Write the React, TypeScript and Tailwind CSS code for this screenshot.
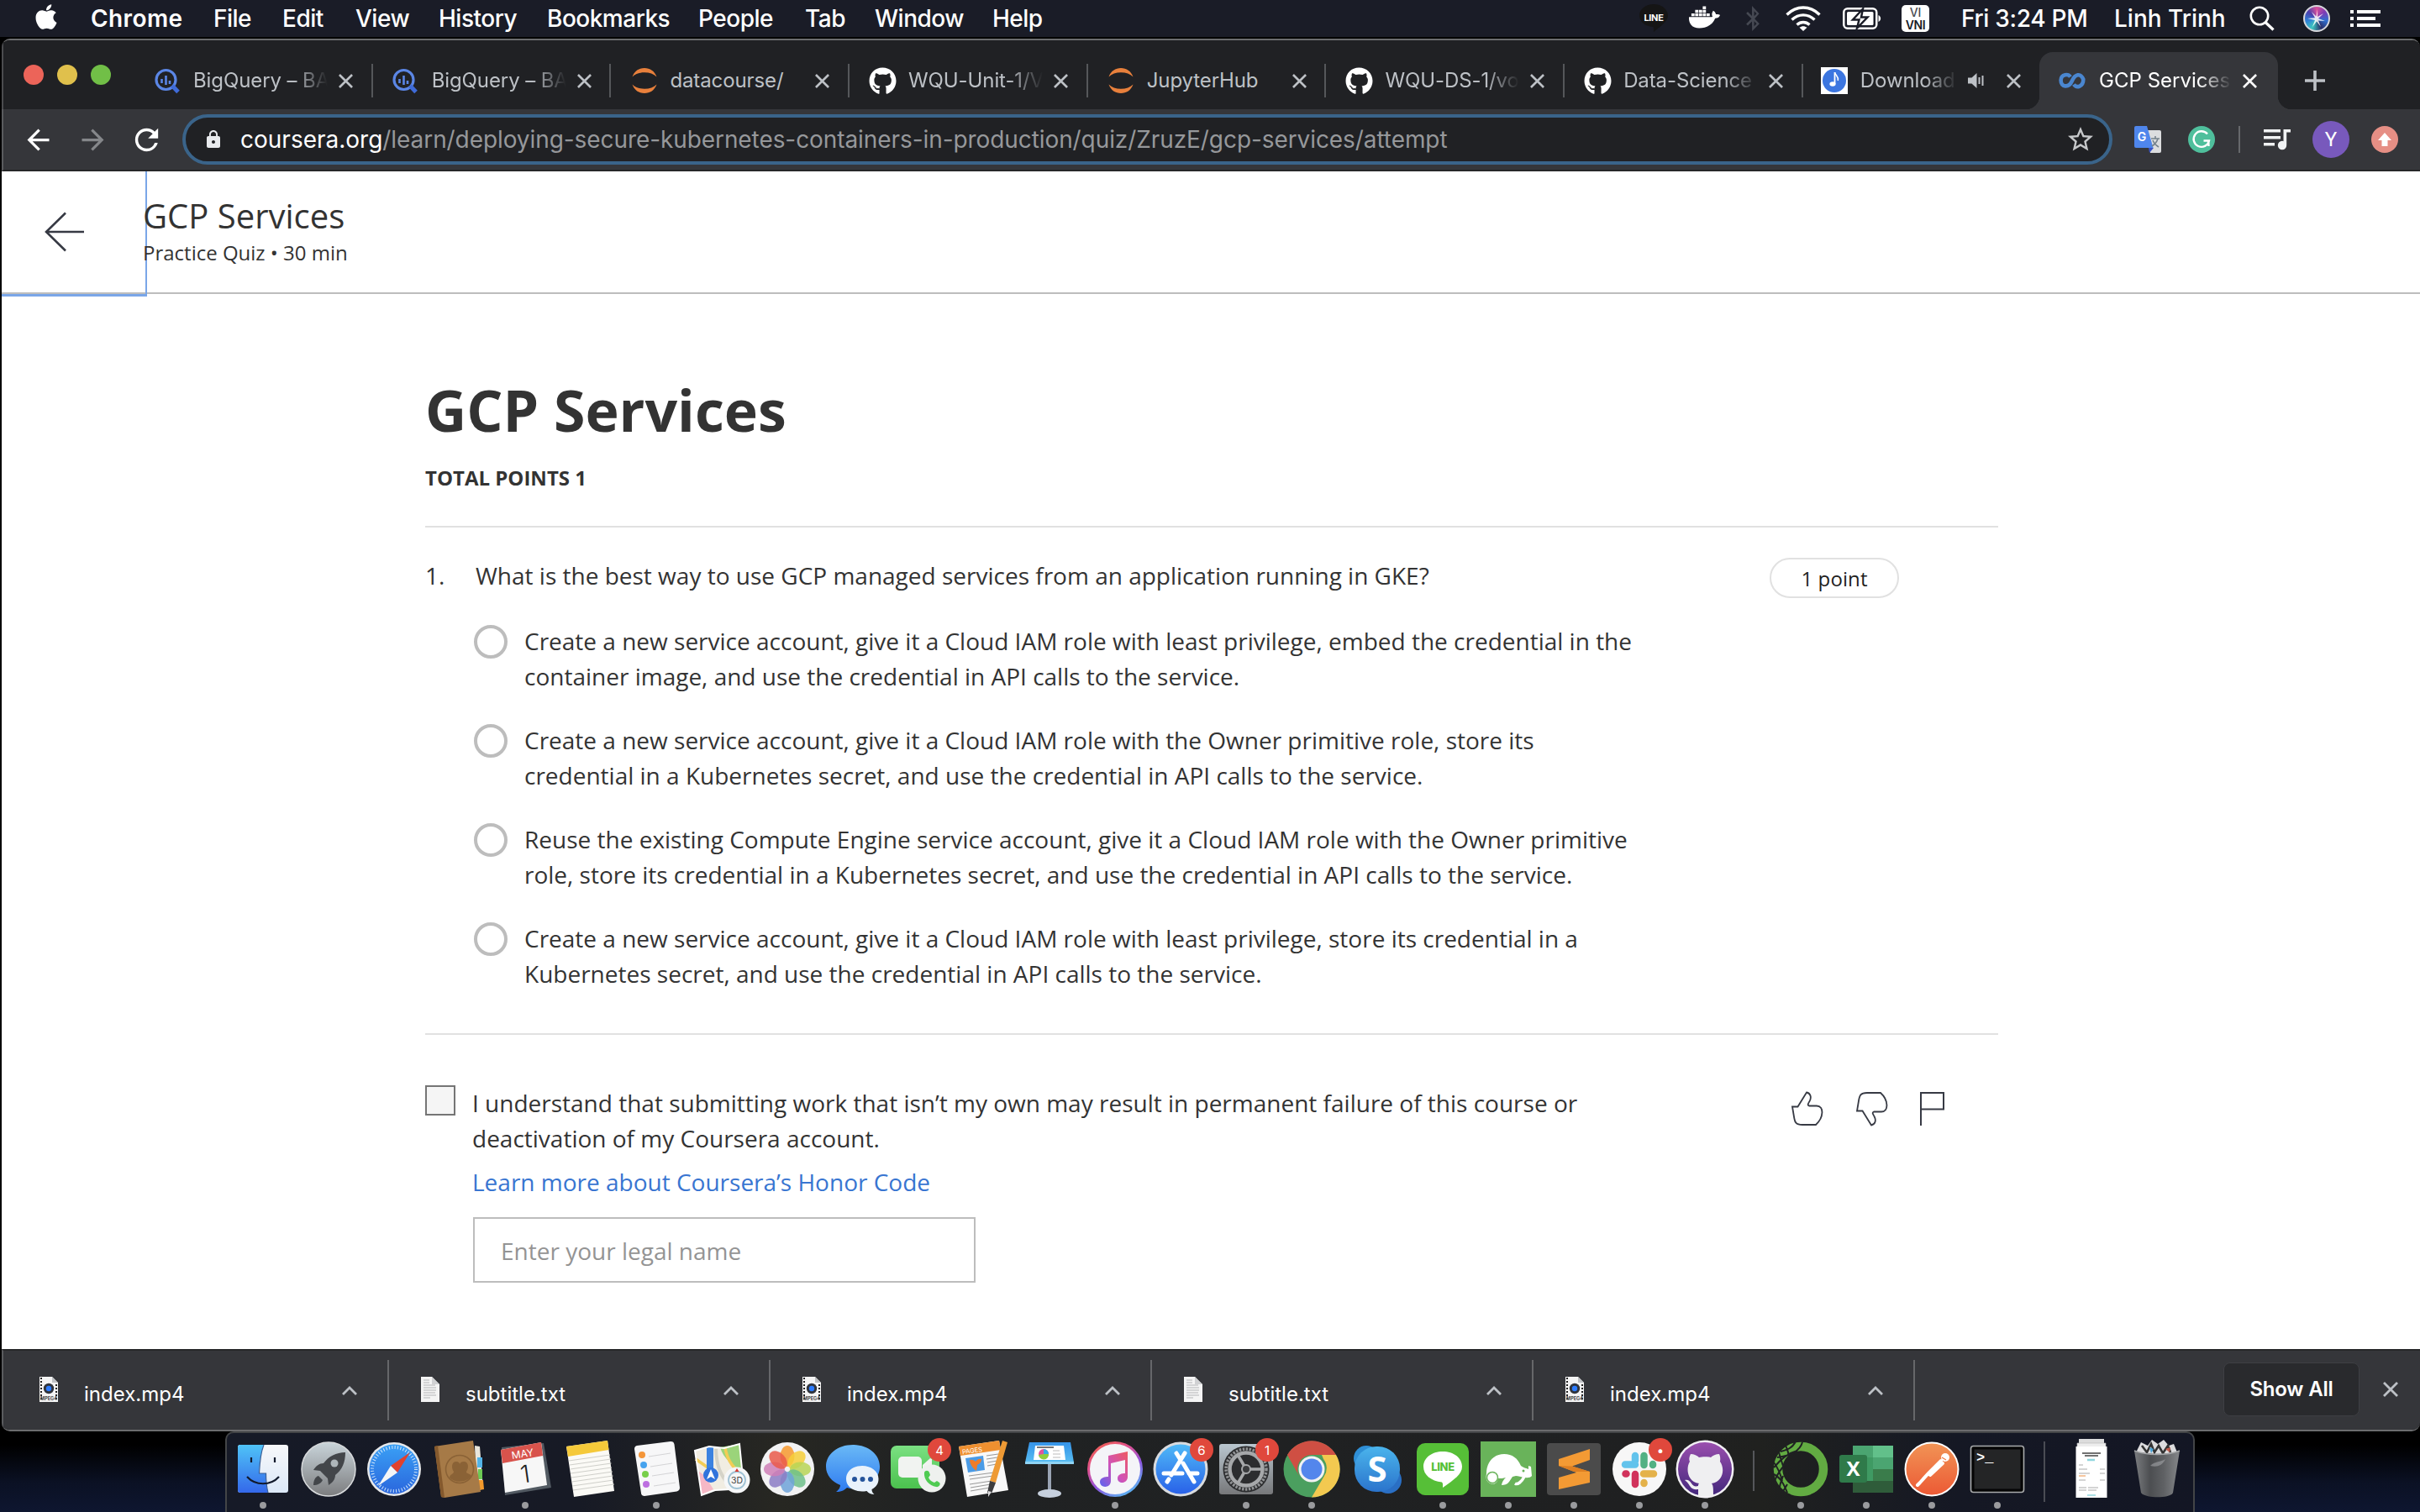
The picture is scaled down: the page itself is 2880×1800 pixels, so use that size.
import React from 'react';
import { FaApple, FaBluetoothB, FaDocker, FaGithub } from 'react-icons/fa';
import { MdArrowBack, MdArrowForward, MdLock, MdRefresh, MdStarBorder } from 'react-icons/md';

type Kids = { children?: React.ReactNode };

/* ---------- menu bar ---------- */

const menus: [string, string][] = [
  ['File', 'w-[82px]'],
  ['Edit', 'w-[87px]'],
  ['View', 'w-[99px]'],
  ['History', 'w-[129px]'],
  ['Bookmarks', 'w-[180px]'],
  ['People', 'w-[127px]'],
  ['Tab', 'w-[83px]'],
  ['Window', 'w-[140px]'],
  ['Help', 'w-[80px]'],
];

function MenuBar() {
  return (
    <div className="flex h-[46px] shrink-0 items-center border-b-2 border-black bg-[#1a1c27] text-[28px] font-medium tracking-[-0.5px] text-white">
      <FaApple className="ml-[38px] -mt-1 size-[34px] shrink-0" />
      <span className="ml-[36px] w-[146px] shrink-0 font-semibold tracking-[0.4px]">Chrome</span>
      {menus.map(([m, w]) => (
        <span key={m} className={'shrink-0 ' + w}>{m}</span>
      ))}
      <svg className="ml-[689px] h-[36px] w-[36px] shrink-0" viewBox="0 0 36 36">
        <path d="M18 1c9.500 0 17 6 17 13.500C35 22 25 28 18 34 18 30 18 28 17 28 7.500 27 1 21.500 1 14.500 1 7 8.500 1 18 1z" fill="#151515" />
        <text x="18" y="20.500" textAnchor="middle" fontSize="11" fontWeight="700" letterSpacing="-0.3" fill="#fff" fontFamily="Inter">LINE</text>
      </svg>
      <FaDocker className="ml-[24px] -mt-1 size-[37px] shrink-0" />
      <FaBluetoothB className="ml-[24px] size-[30px] shrink-0 text-[#454852]" />
      <svg className="ml-[24px] h-[32px] w-[42px] shrink-0" viewBox="0 0 42 32" fill="none" stroke="#fff" strokeWidth="3.400">
        <path d="M1.500 11.500C13 .2 29 .2 40.500 11.500" />
        <path d="M7.500 17.500c8-7.500 19-7.500 27 0" />
        <path d="M13.500 23.500c4.500-4 10.500-4 15 0" />
        <path d="M21 31l-4.500-4.200c2.800-2.200 6.200-2.200 9 0z" fill="#fff" stroke="none" />
      </svg>
      <svg className="ml-[26px] h-[26px] w-[46px] shrink-0" viewBox="0 0 46 26">
        <rect x="1.250" y="1.250" width="39" height="23.500" rx="4.500" fill="none" stroke="#fff" strokeWidth="2.500" />
        <rect x="5" y="5" width="31.500" height="16" rx="1.500" fill="#fff" />
        <path d="M42.500 9c3.500 1.500 3.500 6.500 0 8z" fill="#fff" />
        <path d="M24 1.500L12 14.500h7.500L17 24.500 29.500 11.500H22z" fill="#fff" stroke="#1a1c27" strokeWidth="2.500" />
      </svg>
      <svg className="ml-[24px] h-[32px] w-[33px] shrink-0" viewBox="0 0 33 32">
        <rect width="33" height="32" rx="5" fill="#fff" />
        <text x="16.500" y="13.500" textAnchor="middle" fontSize="14" fontWeight="500" letterSpacing="0" fill="#4a4b52" fontFamily="Inter">VI</text>
        <text x="16.500" y="28.500" textAnchor="middle" fontSize="14" fontWeight="600" letterSpacing="-0.4" fill="#1a1c27" fontFamily="Inter">VNI</text>
      </svg>
      <span className="ml-[38px] w-[182px] shrink-0 whitespace-nowrap tracking-[-0.3px]">Fri 3:24 PM</span>
      <span className="w-[161px] shrink-0 whitespace-nowrap tracking-[0px]">Linh Trinh</span>
      <svg className="h-[30px] w-[30px] shrink-0" viewBox="0 0 30 30" fill="none" stroke="#fff">
        <circle cx="12" cy="12" r="10.200" strokeWidth="2.600" />
        <path d="M19 19.500l9.500 9" strokeWidth="3.200" />
      </svg>
      <div className="ml-[34px] flex size-[32px] shrink-0 items-center justify-center rounded-full border-2 border-[#d6d7dc] bg-[conic-gradient(#d9509a,#7d3bb5,#2f6fd0,#2a2f6a,#3fc7c0,#2f7fd6,#4a3fae,#d9509a)]">
        <svg viewBox="0 0 24 24" className="size-[24px]" fill="#fff">
          <path d="M13 1l0 9 7-4-6 6 8 3-8-.5L17 22l-5-6.500L7 22l3-8-9-2 9-.8L6 4l5.500 5.500z" opacity=".85" />
        </svg>
      </div>
      <svg className="ml-[24px] h-[20px] w-[36px] shrink-0" viewBox="0 0 36 20" fill="#fff">
        <path d="M0 0h4v4H0zM8 0h28v4H8zM0 8h4v4H0zM8 8h22v4H8zM0 16h4v4H0zM8 16h28v4H8z" />
      </svg>
    </div>
  );
}

/* ---------- tab strip ---------- */

const BigQueryIcon = () => (
  <svg viewBox="0 0 32 32" className="size-8" fill="none" stroke="#5b86e5">
    <circle cx="13.500" cy="15" r="11.500" strokeWidth="3.200" />
    <path d="M8.500 14v5M13.500 10v11M18 16v4" strokeWidth="2.600" />
    <path d="M21 22l7 7.500" strokeWidth="5" stroke="#3f6bd8" />
  </svg>
);
const JupyterIcon = () => (
  <svg viewBox="0 0 32 32" className="size-8" fill="#e8803c">
    <path d="M1.500 11.500C4 4.500 9.500 1 16 1s12 3.500 14.500 10.500C27 8 22 6.300 16 6.300S5 8 1.500 11.500z" />
    <path d="M1.500 20.500C4 27.500 9.500 31 16 31s12-3.500 14.500-10.500C27 24 22 25.700 16 25.700S5 24 1.500 20.500z" />
  </svg>
);
const GithubTabIcon = () => <FaGithub className="size-[33px] text-white" />;
const MusicIcon = () => (
  <svg viewBox="0 0 32 32" className="size-8">
    <path d="M0 0h32v32H0z" fill="#fff" />
    <circle cx="16" cy="16" r="14" fill="#3c76e0" />
    <ellipse cx="14" cy="20" rx="3.600" ry="2.800" fill="#fff" />
    <path d="M16.500 6v14" stroke="#fff" strokeWidth="1.800" />
    <path d="M16.500 6c.5 4 5 4.500 3.800 10" stroke="#fff" strokeWidth="1.600" fill="none" />
  </svg>
);
const CourseraIcon = () => (
  <svg viewBox="0 0 32 20" className="h-5 w-8" fill="none" stroke="#4a86cf" strokeWidth="4.600">
    <path d="M14 5.500C11.500 2 3 1.500 2.600 9.500c0 8.500 9.400 9.500 13.200 1S26 .5 29.300 8.500c0 8.500-7.800 11-11.300 6" />
  </svg>
);

const CloseX = ({ className = 'size-[17px]' }: { className?: string }) => (
  <svg viewBox="0 0 18 18" className={'shrink-0 ' + className} stroke="currentColor" strokeWidth="2.800">
    <path d="M1 1l16 16M17 1L1 17" />
  </svg>
);

const fade = 'overflow-hidden whitespace-nowrap [mask-image:linear-gradient(to_right,#000_calc(100%-40px),transparent)]';

const tabs: { title: string; icon: React.ReactNode; sound?: boolean; long?: boolean }[] = [
  { title: 'BigQuery – BA', icon: <BigQueryIcon />, long: true },
  { title: 'BigQuery – BA', icon: <BigQueryIcon />, long: true },
  { title: 'datacourse/', icon: <JupyterIcon /> },
  { title: 'WQU-Unit-1/V', icon: <GithubTabIcon />, long: true },
  { title: 'JupyterHub', icon: <JupyterIcon /> },
  { title: 'WQU-DS-1/vo', icon: <GithubTabIcon />, long: true },
  { title: 'Data-Science', icon: <GithubTabIcon />, long: true },
  { title: 'Download', icon: <MusicIcon />, sound: true, long: true },
];

function TabStrip() {
  return (
    <div className="flex h-[82px] shrink-0 border-l-2 border-[#4b4c4f] bg-[#202124] text-[24px] text-[#bdc1c6]">
      <div className="flex w-[156px] shrink-0 items-center gap-4 pl-6">
        <div className="size-6 rounded-full bg-[#ec6459]" />
        <div className="size-6 rounded-full bg-[#e0c04c]" />
        <div className="size-6 rounded-full bg-[#71bf47]" />
      </div>
      {tabs.map((t, i) => (
        <div key={i} className="flex w-[283.7px] shrink-0 items-center pt-[14px] pl-[23px]">
          <div className={'flex w-[33px] shrink-0 justify-center ' + (t.sound ? '-ml-[2px] mr-[2px]' : '')}>{t.icon}</div>
          <div className={'shrink-0 tracking-[-0.1px] ' + (t.sound ? 'ml-[12px] w-[116px] ' : 'ml-[14px] w-[160px] ') + (t.long ? fade : 'whitespace-nowrap')}>{t.title}</div>
          {t.sound && (
            <svg viewBox="0 0 20 18" className="ml-[12px] h-[18px] w-5 shrink-0" fill="currentColor">
              <path d="M0 5.500h4.500L10.500 0v18l-6-5.500H0zM12.500 5h2v8h-2zM16.500 3h2v12h-2z" />
            </svg>
          )}
          <CloseX className={'size-[17px] ' + (t.sound ? 'ml-[26px]' : 'ml-[13px]')} />
          {i < 7 && <div className="ml-auto h-10 w-[2px] bg-[#55575a]" />}
        </div>
      ))}
      <div className="relative -ml-[2.400px] flex h-[68px] w-[284px] shrink-0 items-center self-end rounded-t-[16px] bg-[#35363a] pl-[23px] text-white">
        <div className="absolute bottom-0 -left-4 size-4 bg-[radial-gradient(circle_at_0_0,transparent_16px,#35363a_16.5px)]" />
        <div className="absolute -right-4 bottom-0 size-4 bg-[radial-gradient(circle_at_100%_0,transparent_16px,#35363a_16.5px)]" />
        <CourseraIcon />
        <div className={'ml-[16px] w-[158px] shrink-0 ' + fade}>GCP Services</div>
        <CloseX className="ml-[13px] size-[17px]" />
      </div>
      <svg viewBox="0 0 24 24" className="mt-9 ml-[32px] size-6 shrink-0" stroke="#bdc1c6" strokeWidth="3.600">
        <path d="M0 12h24M12 0v24" />
      </svg>
    </div>
  );
}

/* ---------- toolbar ---------- */

function Toolbar() {
  return (
    <div className="flex h-[74px] shrink-0 items-center border-b-2 border-l-2 border-b-[#262729] border-l-[#5a5b5e] bg-[#35363a]">
      <MdArrowBack className="ml-[22px] size-[39px] shrink-0 text-white" />
      <MdArrowForward className="ml-[26px] size-[39px] shrink-0 text-[#85878a]" />
      <MdRefresh className="ml-[24px] size-[41px] shrink-0 text-white" />
      <div className="ml-[22px] flex h-[60px] w-[2297px] shrink-0 items-center rounded-full border-4 border-[#3a648a] bg-[#202124] text-[28px]">
        <MdLock className="ml-[21px] size-[24px] shrink-0 text-[#e8eaed]" />
        <span className="ml-[20px] whitespace-nowrap text-white">coursera.org</span>
        <span className="tracking-[-0.08px] whitespace-nowrap text-[#96989b]">/learn/deploying-secure-kubernetes-containers-in-production/quiz/ZruzE/gcp-services/attempt</span>
        <MdStarBorder className="mr-[16px] ml-auto size-[36px] shrink-0 text-[#c6c8ca]" />
      </div>
      <svg viewBox="0 0 32 32" className="ml-[26px] size-8 shrink-0">
        <path d="M14 5h16a2 2 0 0 1 2 2v23a2 2 0 0 1-2 2H19z" fill="#dcdddf" />
        <path d="M17 26h6l-5 6z" fill="#3a53c4" />
        <path d="M2 0h13l7.500 26H2a2 2 0 0 1-2-2V2a2 2 0 0 1 2-2z" fill="#4f86ec" />
        <text x="9" y="18" textAnchor="middle" fontSize="14" fontWeight="600" fill="#fff" fontFamily="Inter">G</text>
        <path d="M20 15h10M25 12v3M28 15c-1 4-4 7-7 9M22 17c1 3 4 6 7 8" stroke="#75828c" strokeWidth="1.600" fill="none" />
      </svg>
      <svg viewBox="0 0 32 32" className="ml-[32px] size-8 shrink-0" fill="none">
        <circle cx="16" cy="16" r="16" fill="#4fbf9c" />
        <path d="M23 9.500A9.300 9.300 0 1 0 25 17.500h-6.500M24.300 18.500l.2 5.500" stroke="#fff" strokeWidth="2.400" />
      </svg>
      <div className="ml-[28px] h-8 w-[2px] shrink-0 bg-[#66686b]" />
      <svg viewBox="0 0 32 26" className="ml-[28px] h-[26px] w-8 shrink-0" fill="#f1f3f4">
        <path d="M0 1h20v3.600H0zM0 9h20v3.600H0zM0 17h13v3.600H0z" />
        <path d="M23.500 1H32v3.600h-4.800V19.500h-3.700z" />
        <circle cx="22" cy="20" r="5.200" />
      </svg>
      <div className="ml-[26px] flex size-[44px] shrink-0 items-center justify-center rounded-full bg-[#7859bc] font-['Roboto'] text-[24px] text-white">Y</div>
      <svg viewBox="0 0 32 32" className="ml-[26px] size-8 shrink-0">
        <circle cx="16" cy="16" r="16" fill="#e68f85" />
        <path d="M16 8l8 9h-4.500v7h-7v-7H8z" fill="#fff" />
      </svg>
    </div>
  );
}

/* ---------- quiz page ---------- */

const answers: [string, string][] = [
  ['Create a new service account, give it a Cloud IAM role with least privilege, embed the credential in the', 'container image, and use the credential in API calls to the service.'],
  ['Create a new service account, give it a Cloud IAM role with the Owner primitive role, store its', 'credential in a Kubernetes secret, and use the credential in API calls to the service.'],
  ['Reuse the existing Compute Engine service account, give it a Cloud IAM role with the Owner primitive', 'role, store its credential in a Kubernetes secret, and use the credential in API calls to the service.'],
  ['Create a new service account, give it a Cloud IAM role with least privilege, store its credential in a', 'Kubernetes secret, and use the credential in API calls to the service.'],
];

function Page() {
  return (
    <div className="flex h-[1402px] shrink-0 flex-col bg-white font-['Open_Sans',sans-serif] text-[28px] leading-[42px] text-[#333]">
      <header className="relative flex h-[146px] shrink-0 border-b-2 border-[#bdbdbd]">
        <div className="absolute top-0 left-0 h-[149px] w-[173px] border-r-2 border-b-[3px] border-[#7aa6e8]" />
        <div className="flex w-[168px] shrink-0 items-center pl-[51px]">
          <svg viewBox="0 0 48 48" className="size-[48px]" fill="none" stroke="#373a44" strokeWidth="2.600">
            <path d="M47 24H2M25 1.500L2 24l23 22.500" />
          </svg>
        </div>
        <div className="relative pt-[25px]">
          <div className="text-[40px] leading-[56px]">GCP Services</div>
          <div className="text-[24px] leading-[32px]">Practice Quiz • 30 min</div>
        </div>
      </header>
      <main className="ml-[504px] flex w-[1872px] flex-col pt-[98px]">
        <h1 className="text-[68px] leading-[80px] font-bold">GCP Services</h1>
        <div className="mt-[25px] text-[24px] leading-[32px] font-bold">TOTAL POINTS 1</div>
        <div className="mt-[41px] h-[2px] bg-[#e1e1e1]" />
        <div className="mt-[36px] flex">
          <span className="w-[60px]">1.</span>
          <span className="w-[1540px]">What is the best way to use GCP managed services from an application running in GKE?</span>
          <span className="-mb-[6px] flex h-12 w-[154px] items-center justify-center rounded-full border-2 border-[#e1e1e1] pt-[2px] text-[24px] leading-[32px] tracking-[0.1px] text-[#1f1f1f]">1 point</span>
        </div>
        <div className="mt-[36px] flex flex-col gap-[34px] pl-[58px]">
          {answers.map(([a, b]) => (
            <div key={a + b} className="flex gap-[20px]">
              <div className="mt-[2px] size-10 shrink-0 rounded-full border-4 border-[#bdbdbd]" />
              <div className="whitespace-nowrap">
                <div>{a}</div>
                <div>{b}</div>
              </div>
            </div>
          ))}
        </div>
        <div className="mt-[50px] h-[2px] bg-[#e1e1e1]" />
        <div className="mt-[60px] flex">
          <div className="size-9 shrink-0 border-2 border-[#757575] bg-[#f5f5f5]" />
          <div className="ml-[20px] w-[1570px]">
            <div>I understand that submitting work that isn’t my own may result in permanent failure of this course or</div>
            <div>deactivation of my Coursera account.</div>
            <div className="mt-[10px] text-[#3875d1]">Learn more about Coursera’s Honor Code</div>
            <div className="mt-[21px] ml-[1px] flex h-[78px] w-[598px] items-center border-2 border-[#bdbdbd] pt-[2px] pl-[31px] text-[#949494]">Enter your legal name</div>
          </div>
          <div className="mt-[7px] flex h-[42px]">
            <svg viewBox="0 0 38 42" className="h-[42px] w-[38px]" fill="none" stroke="#373a44" strokeWidth="1.800">
              <path d="M1 18.500h6.500L18 1.500c5 1 6 6 3.500 10.500-1.500 2.500-3 4.500-.5 5.500h9c9 0 8.500 14-1 22.500H13c-8 0-9-3-10-9.500z" />
            </svg>
            <svg viewBox="0 0 38 42" className="ml-[39px] h-[42px] w-[38px]" fill="none" stroke="#373a44" strokeWidth="1.800">
              <path d="M1 23.500h6.500L18 40.500c5-1 6-6 3.500-10.500-1.500-2.500-3-4.500-.5-5.500h9c9 0 8.500-14-1-22.500H13c-8 0-9 3-10 9.500z" />
            </svg>
            <svg viewBox="0 0 30 42" className="ml-[37px] h-[42px] w-[30px]" fill="none" stroke="#373a44" strokeWidth="2">
              <path d="M2 41V2h27v19.500H2" />
            </svg>
          </div>
        </div>
      </main>
    </div>
  );
}

/* ---------- downloads ---------- */

const FilmFile = () => (
  <svg viewBox="0 0 22 30" className="h-[30px] w-[22px] shrink-0">
    <path d="M0 0h15l7 7v23H0z" fill="#f4f4f4" />
    <path d="M2 1v28M20 9v20" stroke="#222" strokeWidth="2" strokeDasharray="2 2" />
    <path d="M15 0v7h7z" fill="#bfc1c4" />
    <circle cx="11" cy="14" r="6.200" fill="#30343c" />
    <circle cx="11" cy="14" r="3.200" fill="#2b7bff" />
    <text x="11" y="28" textAnchor="middle" fontSize="5.500" fontWeight="700" fill="#444" fontFamily="Inter">MPEG4</text>
  </svg>
);
const TextFile = () => (
  <svg viewBox="0 0 22 30" className="h-[30px] w-[22px] shrink-0">
    <path d="M0 0h13l9 9v21H0z" fill="#f4f4f4" />
    <path d="M13 0v9h9z" fill="#d0d1d3" />
    <path d="M3 4h7M3 7h7M3 10h14M3 13h15M3 16h15M3 19h14M3 22h15M3 25h8" stroke="#b4b5b7" strokeWidth="1" />
  </svg>
);

function Shelf() {
  return (
    <div className="flex h-[96px] shrink-0 border-t-2 border-l-2 border-t-[#262729] border-l-[#5a5b5e] bg-[#35363a] pl-[5px] text-[24px] text-white">
      {['index.mp4', 'subtitle.txt', 'index.mp4', 'subtitle.txt', 'index.mp4'].map((f, i) => (
        <div key={i} className="flex w-[454px] shrink-0 items-center pl-[38px]">
          <div className="-mt-[3px]">{f === 'index.mp4' ? <FilmFile /> : <TextFile />}</div>
          <span className="ml-[31px] w-[307px] pt-[9px]">{f}</span>
          <svg viewBox="0 0 18 11" className="h-[11px] w-[18px] shrink-0" fill="none" stroke="#bdc1c6" strokeWidth="2.800">
            <path d="M1 10l8-8 8 8" />
          </svg>
          <div className="ml-auto h-[72px] w-[2px] bg-[#66676a]" />
        </div>
      ))}
      <div className="mt-[14px] ml-[367px] flex h-16 w-[162px] shrink-0 items-center justify-center rounded-[8px] border border-[#3e3f43] bg-[#292a2d] font-semibold tracking-[-0.2px]">Show All</div>
      <CloseX className="mt-[37px] ml-[28px] size-[18px] text-[#bdc1c6]" />
    </div>
  );
}

/* ---------- dock ---------- */

const S = ({ children }: Kids) => (
  <svg viewBox="0 0 72 72" className="size-[72px] overflow-visible">
    {children}
  </svg>
);

const Grad = ({ id, a, b }: { id: string; a: string; b: string }) => (
  <linearGradient id={id} x1="0" y1="0" x2="0" y2="1">
    <stop offset="0" stopColor={a} />
    <stop offset="1" stopColor={b} />
  </linearGradient>
);

const petals = ['#f79a2e', '#f6cf3a', '#b9d556', '#6fc08a', '#6fa3d8', '#8c7cc4', '#cf7fb6', '#ea5a4a'];

const Finder = () => (
  <S>
    <Grad id="fa" a="#4fc3f7" b="#3468ea" />
    <Grad id="fb" a="#f7f8fa" b="#dbe8f8" />
    <rect x="6" y="7" width="60" height="57" rx="3" fill="url(#fb)" />
    <path d="M9 7h28c-4 10-5 22-5.500 34h8c0 8 .5 15 2.500 23H9a3 3 0 0 1-3-3V10a3 3 0 0 1 3-3z" fill="url(#fa)" />
    <path d="M37 7c-4 10-5 22-5.500 34h8c0 8 .5 15 2.500 23" stroke="#3a5f96" strokeWidth="1.200" fill="none" />
    <path d="M22 22v6M50 22v6M17 45c10 11 28 11 38 0" stroke="#111a2c" strokeWidth="2.200" fill="none" />
  </S>
);
const Launchpad = () => (
  <S>
    <Grad id="lp" a="#c9d4da" b="#7c7d7f" />
    <circle cx="36" cy="36" r="32" fill="url(#lp)" stroke="#d8dadc" strokeWidth="1.500" />
    <path d="M56 16c-11 0-20 5-26 13-5 0-9 3-12 8l8 1 9 9 1 8c5-3 8-7 8-12 8-6 12-15 12-27zM24 44c-4 1-6 6-6 11 5 0 9-2 11-6z" fill="#43464a" />
    <circle cx="43" cy="29" r="4.500" fill="#aeb6ba" />
  </S>
);
const Safari = () => (
  <S>
    <Grad id="sf" a="#3aa0f5" b="#2a66dd" />
    <circle cx="36" cy="36" r="32" fill="#e6e8ea" />
    <circle cx="36" cy="36" r="29.500" fill="url(#sf)" />
    <circle cx="36" cy="36" r="26" fill="none" stroke="#cfe6fb" strokeWidth="4" strokeDasharray="1 2.400" />
    <path d="M55 16L32 32l8 8z" fill="#e1412f" />
    <path d="M17 56l15-24 8 8z" fill="#f4f5f7" />
  </S>
);
const Contacts = () => (
  <S>
    <path d="M54 8l6 1 4 50-8 4z" fill="#e9e6dc" />
    <path d="M57 22h6v12h-6z" fill="#53b4e8" />
    <path d="M58 36h5v12h-5z" fill="#6ccb54" />
    <path d="M59 49h5l1 11-6 1z" fill="#f39a2c" />
    <path d="M6 9L52 2l9 61-43 7-4-1z" fill="#a67a47" />
    <path d="M6 9l4-1 8 62-4-1z" fill="#84592d" />
    <circle cx="36" cy="36" r="16.500" fill="none" stroke="#8a6236" strokeWidth="1.600" />
    <path d="M24 46c0-4 5-4 5-7-3-4-3-12 3-12 3 0 4 2 4 3 1-2 2-3 5-3 6 0 6 8 3 12 0 3 5 2 6 5-5 8-20 9-26 2z" fill="#8a6236" />
  </S>
);
const Calendar = () => (
  <S>
    <path d="M8 10l50-5 9 53-55 9z" fill="#525a62" />
    <path d="M7 13L55 4l7 51-50 9z" fill="#f7f7f7" />
    <path d="M7 13L55 4l2 16-48 9z" fill="#d8534c" />
    <text x="33" y="22" textAnchor="middle" fontSize="12" fill="#fff" fontFamily="Inter" transform="rotate(-9 33 18)">MAY</text>
    <text x="36" y="52" textAnchor="middle" fontSize="29" fontWeight="300" fill="#222" fontFamily="Inter" transform="rotate(-8 36 42)">1</text>
  </S>
);
const Notes = () => (
  <S>
    <path d="M7 9L56 2l8 60-48 7z" fill="#fbfaf6" />
    <path d="M7 9L56 2l1.500 11L9 21z" fill="#f5c93a" />
    <path d="M10 26l49-7M11 31l49-7M11.500 36l49-7M12 41l49-7M13 46l49-7M13.500 51l49-7M14 56l49-7M15 61l49-7" stroke="#cfcfca" strokeWidth="1" />
  </S>
);
const Reminders = () => (
  <S>
    <path d="M13 8l40-5c3 0 4 1 4.500 3.500L64 58c0 2-1 4-3.500 4.500L22 68c-2 0-4-1-4-3.500L10 12c0-2 1-3.500 3-4z" fill="#f7f7f8" />
    <circle cx="19" cy="19" r="4" fill="#f4963a" />
    <circle cx="21" cy="31" r="4" fill="#47a3ee" />
    <circle cx="23" cy="42" r="4" fill="#78cf4a" />
    <circle cx="24" cy="54" r="4" fill="#bd6fe0" />
    <path d="M27 21l26-4M29 33l26-4M31 44l26-4M33 56l26-4" stroke="#d4d4d6" strokeWidth="1.200" />
  </S>
);
const Maps = () => (
  <S>
    <path d="M4 14l17-5 18 2 18-5 5 50-16 4-18 1-16 6z" fill="#f1ede2" />
    <path d="M34 10l23-4 3 32c-10-6-22-14-26-28z" fill="#9bd47a" />
    <path d="M8 38l8 6 10 16-14 6z" fill="#f6b8c6" />
    <path d="M5 24l20 14M40 10c2 16 12 28 22 33" stroke="#f3cd55" strokeWidth="3.500" fill="none" />
    <path d="M46 60C40 46 30 42 29 12" stroke="#d5d3c8" strokeWidth="4" fill="none" />
    <path d="M18 10h8v33h-8z" fill="#3b82e0" />
    <circle cx="23" cy="43" r="9" fill="#3174dc" />
    <path d="M23 36l5 12-5-3-5 3z" fill="#fff" />
    <path d="M4 14l17-5 18 2 18-5 5 50-16 4-18 1-16 6z" fill="none" stroke="#fff" strokeWidth="2" />
    <circle cx="54" cy="49" r="15.500" fill="#f6f7f8" />
    <circle cx="54" cy="49" r="10" fill="none" stroke="#9fc2d4" strokeWidth="1.800" />
    <path d="M54 35l2.500 4h-5z" fill="#d63a30" />
    <text x="54" y="53" textAnchor="middle" fontSize="10.500" fill="#444" fontFamily="Inter">3D</text>
  </S>
);
const Photos = () => (
  <S>
    <circle cx="36" cy="36" r="32" fill="#f2f2f3" />
    {petals.map((c, i) => (
      <ellipse key={c} cx="36" cy="20.500" rx="8.500" ry="12.500" fill={c} opacity="0.85" transform={`rotate(${i * 45} 36 36)`} />
    ))}
  </S>
);
const Messages = () => (
  <S>
    <Grad id="ms" a="#6ab9f6" b="#2f7bf0" />
    <path d="M36 7c18 0 32 11 32 26S54 59 36 59c-2 0-5 0-7-1-3 3-7 5-13 5 4-3 5-6 5-8C11 51 4 43 4 33 4 18 18 7 36 7z" fill="url(#ms)" />
    <path d="M47 32c11 0 19.500 6.500 19.500 15.500 0 6-3 10-8 12.500 0 2 .5 4 3 6-4 0-7-1.500-9-4-2 .5-4 .5-5.500.5-11 0-19-6-19-15s8-15.500 19-15.500z" fill="#e9f2fb" />
    <circle cx="38" cy="48" r="3" fill="#24539b" /><circle cx="47.500" cy="48" r="3" fill="#24539b" /><circle cx="57" cy="48" r="3" fill="#24539b" />
  </S>
);
const Facetime = () => (
  <S>
    <Grad id="ft" a="#7be082" b="#4bc14e" />
    <rect x="3" y="8" width="58" height="51" rx="7" fill="url(#ft)" />
    <rect x="12" y="21" width="28" height="25" rx="5" fill="#f1f3f1" />
    <path d="M41 31l9-8 2 1v18H41z" fill="#f1f3f1" />
    <circle cx="52" cy="47" r="16.500" fill="#eef1ee" />
    <path d="M43 40c1-3 5-3 6 0l1 3-2 3c1 3 4 5 7 6l3-2 3 2c2 2-1 6-4 5-8-1-15-9-14-17z" fill="#4fcb52" />
  </S>
);
const Pages = () => (
  <S>
    <path d="M6 9L54 2l11 59-49 8z" fill="#f8f8f8" />
    <path d="M6 9L54 2l2 11-48 7z" fill="#ef9030" />
    <text x="22" y="16.500" textAnchor="middle" fontSize="7.500" fill="#fff" fontFamily="Inter" transform="rotate(-8 22 14)">PAGES</text>
    <path d="M14 23l21-3 2 17-20 3z" fill="#4a9be6" />
    <path d="M19 25c3-1 6 1 7 2 2-3 5-4 7-3 0 4-3 6-5 7l-1 7c-4-3-8-8-8-13z" fill="#ef7c2a" />
    <path d="M39 20l14-2M39 24l13-2M40 28l12-2M40 32l11-2M18 44l30-4M19 48l28-4M19 54l26-4M20 58l24-4M20 62l23-4" stroke="#9a9a9a" strokeWidth="1.100" />
    <path d="M58 2l6 2-14 48-7-2z" fill="#ee9a34" />
    <path d="M43 50l7 2-5 13-5-1z" fill="#3c3c3e" />
    <path d="M41 62l4 1-4 6z" fill="#dcdcde" />
  </S>
);
const Keynote = () => (
  <S>
    <Grad id="kn" a="#3593e8" b="#58bdf2" />
    <path d="M34 30h4v37h-4z" fill="#9aa4b4" />
    <path d="M12 4h49l4 24H7z" fill="url(#kn)" />
    <path d="M7 27h58v3H7z" fill="#8fd3f4" />
    <path d="M19 8h34l2 17H17z" fill="#fff" />
    <path d="M21 10h20" stroke="#555" strokeWidth="1.600" />
    <circle cx="29" cy="18" r="6" fill="#e0559d" />
    <path d="M29 18v-6a6 6 0 0 1 6 6z" fill="#33aee8" />
    <path d="M29 18h6a6 6 0 0 1-12 1z" fill="#8fcf3c" />
    <path d="M40 14h8M40 18h9M40 22h9" stroke="#bbb" />
    <ellipse cx="36" cy="65" rx="14" ry="5" fill="#c6d0de" />
  </S>
);
const Music = () => (
  <S>
    <linearGradient id="mr" x1=".2" y1="0" x2=".8" y2="1">
      <stop offset="0" stopColor="#f0604f" /><stop offset=".3" stopColor="#e0508f" /><stop offset=".6" stopColor="#8f55e0" /><stop offset="1" stopColor="#52c3f5" />
    </linearGradient>
    <linearGradient id="mn" x1="1" y1="0" x2="0" y2="1">
      <stop offset="0" stopColor="#ee5b62" /><stop offset=".5" stopColor="#d052b8" /><stop offset="1" stopColor="#5a62f0" />
    </linearGradient>
    <circle cx="36" cy="36" r="33" fill="url(#mr)" />
    <circle cx="36" cy="36" r="30" fill="#f4f4f8" />
    <path d="M28 20l23-5v30c0 9-12 9-12 2 0-5 5-6 9-6V25l-17 4v21c0 9-13 9-13 1 0-5 6-6 10-6z" fill="url(#mn)" />
  </S>
);
const AppStore = () => (
  <S>
    <Grad id="as" a="#4fb9f7" b="#2961e8" />
    <circle cx="36" cy="36" r="32.500" fill="#d9dbde" />
    <circle cx="36" cy="36" r="29.500" fill="url(#as)" />
    <path d="M41 17L25 43M31 17l5 8M39 29l13 22M22 48l-2 3M16 41h22M46 41h10" stroke="#fff" strokeWidth="5" strokeLinecap="round" />
  </S>
);
const Prefs = () => (
  <S>
    <Grad id="pf" a="#b9c6cf" b="#77787a" />
    <rect x="4" y="6" width="64" height="60" rx="3" fill="url(#pf)" />
    <circle cx="36" cy="36" r="27.500" fill="#2c2d2f" />
    <circle cx="36" cy="36" r="24" fill="none" stroke="#909294" strokeWidth="3.500" strokeDasharray="2.500 1.500" />
    <circle cx="36" cy="36" r="19.500" fill="none" stroke="#a6a8aa" strokeWidth="4.500" />
    <path d="M36 36h20M36 36L26 19M36 36L26 53" stroke="#a6a8aa" strokeWidth="3.500" />
    <circle cx="36" cy="36" r="5" fill="#3a3b3d" stroke="#a6a8aa" strokeWidth="2" />
  </S>
);
const Chrome = () => (
  <S>
    <circle cx="36" cy="36" r="33.500" fill="#4b9f5f" />
    <path d="M7 19a33.500 33.500 0 0 1 58 0H36a17 17 0 0 0-15 25z" fill="#cf4f43" />
    <path d="M65 19a33.500 33.500 0 0 1-29 50.500L51 44a17 17 0 0 0-1-20l-2-5z" fill="#f3c950" />
    <circle cx="36" cy="36" r="15.500" fill="#f2f2f2" />
    <circle cx="36" cy="36" r="12.500" fill="#5386ec" />
  </S>
);
const Skype = () => (
  <S>
    <Grad id="sk" a="#4ab4ec" b="#2b74cc" />
    <circle cx="23" cy="23" r="15" fill="#2f8fd6" />
    <circle cx="49" cy="49" r="16" fill="#2a6fc4" />
    <rect x="9" y="9" width="54" height="54" rx="26" fill="url(#sk)" />
    <text x="36" y="51" textAnchor="middle" fontSize="42" fontWeight="700" fill="#fff" fontFamily="Open Sans">S</text>
  </S>
);
const Line = () => (
  <S>
    <rect x="5" y="5" width="62" height="62" rx="10" fill="#56bf37" />
    <path d="M36 15c13 0 23 7.500 23 18 0 9-9 15-23 25 0-3 .5-5-1-6.500C22 50 13 43 13 33c0-10.500 10-18 23-18z" fill="#fff" />
    <text x="36" y="38" textAnchor="middle" fontSize="13" fontWeight="800" letterSpacing="-.4" fill="#56bf37" fontFamily="Inter">LINE</text>
  </S>
);
const Tunnel = () => (
  <S>
    <path d="M3 3h66v66H3z" fill="#69b35a" />
    <path d="M10 41c0-14 9-23 21-23 10 0 16 5 20 14 2 2 7 3 9 4v-4l3 1 1 11c-2 3-7 2-10 2-3-1-6-2-9-2l-4 1-4 6c-2 3-6 4-9 4 1-5 3-7 5-9-3 1-6 1-9 1l-1 3c-2 6-12 4-13-2-1-3 0-5 0-7z" fill="#fff" />
    <path d="M44 53c3 2 8-2 11-8" stroke="#fff" strokeWidth="3.500" fill="none" />
    <circle cx="17" cy="46" r="6.500" fill="none" stroke="#69b35a" strokeWidth="1.500" />
    <circle cx="54" cy="38" r="1.500" fill="#69b35a" />
  </S>
);
const Sublime = () => (
  <S>
    <rect x="4" y="5" width="64" height="62" rx="4" fill="#4b4b4b" />
    <path d="M55 12v13L34 32.500 55 39v13L18 60V46l21-6-21-8V24z" fill="#f39a34" />
    <path d="M18 32l18 7 19 0V39L34 32.500z" fill="#dd7f22" />
  </S>
);
const Slack = () => (
  <S>
    <circle cx="36" cy="36" r="32" fill="#f7f7f7" />
    <g strokeWidth="8.500" strokeLinecap="round">
      <path d="M31 20v6M19 30.500h12" stroke="#62c3ec" />
      <path d="M41.500 20v11M52 31v-1" stroke="#53b184" />
      <path d="M41 41.500h12M41.500 52v1" stroke="#e4b24a" />
      <path d="M31 42v12M19.500 41.500h1" stroke="#d1335c" />
    </g>
  </S>
);
const GithubDesktop = () => (
  <S>
    <Grad id="gh" a="#9a4fae" b="#43277c" />
    <circle cx="36" cy="36" r="34.500" fill="#f2f0f4" />
    <circle cx="36" cy="36" r="32" fill="url(#gh)" />
    <path d="M19 18c4 0 8 2 10 4 4-1 10-1 14 0 2-2 6-4 10-4 2 4 1 8 1 9 6 8 4 24-10 26 2 3 2 5 2 15H28v-8c-8 1-9-3-12-7-1-2-3-3-4-4 4-1 6 1 8 4s4 4 8 3c0-1 0-2 1-3-14-2-16-18-11-26-1-2-1-5 1-9z" fill="#efeff1" />
  </S>
);
const Anaconda = () => (
  <S>
    <circle cx="36" cy="36" r="27" fill="none" stroke="#62ab42" strokeWidth="10.500" />
    <path d="M30 3c-4 8-10 10-18 12M38 4c-3 10-14 16-30 18M32 14c-8 2-18 8-28 20M18 8c2 4 4 10 4 16M10 16c2 8 4 12 6 20M4 28c6 8 8 14 10 22M4 42c8 4 12 12 16 22M18 30C12 36 8 42 5 50M15 44c-2 6-4 10-4 14M20 54l-6 10" stroke="#1f2023" strokeWidth="2" fill="none" />
  </S>
);
const Excel = () => (
  <S>
    <path d="M20 8h48v56H20z" fill="#3f9a63" />
    <path d="M44 8h24v14H44z" fill="#62c08a" />
    <path d="M20 8h24v14H20z" fill="#4ba571" />
    <path d="M44 22h24v14H44z" fill="#4ba571" />
    <path d="M44 36h24v14H44z" fill="#3a7c4b" />
    <path d="M20 50h48v14H20z" fill="#2f5c3a" />
    <rect x="4" y="19" width="33" height="33" rx="3" fill="#2f7a4a" />
    <text x="20.500" y="44" textAnchor="middle" fontSize="24" fontWeight="700" fill="#fff" fontFamily="Open Sans">X</text>
  </S>
);
const Postman = () => (
  <S>
    <Grad id="pm" a="#f19355" b="#ec5a35" />
    <circle cx="36" cy="36" r="32.500" fill="#fff" />
    <circle cx="36" cy="36" r="30.500" fill="url(#pm)" />
    <circle cx="52" cy="22" r="5" fill="#fff" />
    <path d="M47 26L32 41l-11 12-2 2M49 29L34 43" stroke="#fff" strokeWidth="4" fill="none" strokeLinecap="round" />
    <path d="M48 22l5 3" stroke="#ef7a47" strokeWidth="1.200" />
  </S>
);
const Terminal = () => (
  <S>
    <rect x="4.500" y="8.500" width="63" height="55" rx="3" fill="#050505" stroke="#a9abac" strokeWidth="1.600" />
    <rect x="8.500" y="12.500" width="55" height="47" fill="#242526" />
    <text x="11" y="27" fontSize="17" fontWeight="700" fill="#fff" fontFamily="Liberation Mono">&gt;_</text>
  </S>
);
const Receipt = () => (
  <S>
    <path d="M21 0h30v12H21z" fill="#dcdcdc" />
    <path d="M19 5h34v9H19z" fill="#ededed" stroke="#bbb" strokeWidth=".6" />
    <path d="M17.500 9h37v61h-37z" fill="#fff" />
    <path d="M25 17h22M28 20h16" stroke="#444" strokeWidth="1.600" />
    <path d="M31 25h9" stroke="#8fd6de" strokeWidth="2.500" />
    <path d="M21 31h5M21 36h10M46 36h6M21 41h13M46 41h6M21 49h8M46 49h6M21 58h9M32 58h12M21 61h9M32 61h10" stroke="#aaa" strokeWidth="1.100" />
    <path d="M21 44h8" stroke="#f0a060" strokeWidth="1.200" />
    <path d="M31 67h10" stroke="#7fd0d8" strokeWidth="1.300" />
  </S>
);
const Trash = () => (
  <S>
    <linearGradient id="tr">
      <stop offset="0" stopColor="#7b7d80" /><stop offset=".35" stopColor="#4c4e51" /><stop offset=".65" stopColor="#5f6164" /><stop offset="1" stopColor="#85878a" />
    </linearGradient>
    <path d="M12 14l5-10 8 4 5-7 7 5 7-5 6 7 6-2 4 10-4 4H15z" fill="#dcdcde" />
    <path d="M18 8l6 8 5-10 4 10 5-8 5 9 6-9 3 8" stroke="#333" strokeWidth="2.600" fill="none" />
    <path d="M27 10l5 2-3 5z" fill="#4aa3d6" /><path d="M46 12l6-2-1 6z" fill="#c05a4a" />
    <path d="M9 14c14 5 40 5 54 0l-8 50c-2 7-34 7-38 0z" fill="url(#tr)" />
    <path d="M9 14c14 6 40 6 54 0" stroke="#a2a4a6" strokeWidth="1.400" fill="none" />
    <path d="M28 32c6-6 12-4 18-8-4 8-10 10-18 8z" fill="#a2a4a6" opacity=".6" />
  </S>
);

type Item = { el: React.ReactNode; run?: boolean; badge?: string };
const left: Item[] = [
  { el: <Finder />, run: true },
  { el: <Launchpad /> },
  { el: <Safari /> },
  { el: <Contacts /> },
  { el: <Calendar />, run: true },
  { el: <Notes /> },
  { el: <Reminders />, run: true },
  { el: <Maps /> },
  { el: <Photos /> },
  { el: <Messages /> },
  { el: <Facetime />, badge: '4' },
  { el: <Pages /> },
  { el: <Keynote /> },
  { el: <Music />, run: true },
  { el: <AppStore />, badge: '6' },
  { el: <Prefs />, run: true, badge: '1' },
  { el: <Chrome />, run: true },
  { el: <Skype /> },
  { el: <Line />, run: true },
  { el: <Tunnel />, run: true },
  { el: <Sublime />, run: true },
  { el: <Slack />, run: true, badge: '•' },
  { el: <GithubDesktop />, run: true },
];
const middle: Item[] = [
  { el: <Anaconda />, run: true },
  { el: <Excel />, run: true },
  { el: <Postman />, run: true },
  { el: <Terminal />, run: true },
];
const right: Item[] = [{ el: <Receipt /> }, { el: <Trash /> }];

const Group = ({ items }: { items: Item[] }) => (
  <>
    {items.map((it, i) => (
      <div key={i} className="relative flex w-[78px] shrink-0 flex-col items-center">
        {it.el}
        {it.run && <div className="mt-[3px] size-2 rounded-full bg-[#9a9b9e]" />}
        {it.badge && (
          <div className="absolute -top-[1px] left-[50px] flex size-7 items-center justify-center rounded-full bg-[#e0483c] text-[15px] leading-none text-white">{it.badge}</div>
        )}
      </div>
    ))}
  </>
);

function Dock() {
  return (
    <div className="ml-[268px] flex h-[96px] w-[2344px] shrink-0 rounded-t-[10px] border-2 border-b-0 border-[#434547] bg-[linear-gradient(90deg,#161a27_0%,#171a25_18%,#272722_28%,#202223_36%,#1f2021_72%,#20211f_78%,#151824_88%,#131624_100%)] pt-[7px] pl-[4px]">
      <Group items={left} />
      <div className="mt-[14px] mr-[16px] ml-[18px] h-12 w-[2px] shrink-0 bg-[#55575a]" />
      <Group items={middle} />
      <div className="mt-[3px] mr-[16px] ml-[16px] h-[72px] w-[2px] shrink-0 bg-[#4a4c54]" />
      <Group items={right} />
    </div>
  );
}

export default function App() {
  return (
    <div className="flex h-[1800px] w-[2880px] flex-col overflow-hidden bg-[linear-gradient(180deg,#000_0px,#000_1720px,#0b1124_1765px,#0e1630_1800px)] font-['Inter',sans-serif]">
      <MenuBar />
      <div className="ml-[2px] flex h-[1658px] shrink-0 flex-col overflow-hidden rounded-[10px] border-y-2 border-[#6b6c6e]">
        <TabStrip />
        <Toolbar />
        <Page />
        <Shelf />
      </div>
      <Dock />
    </div>
  );
}
